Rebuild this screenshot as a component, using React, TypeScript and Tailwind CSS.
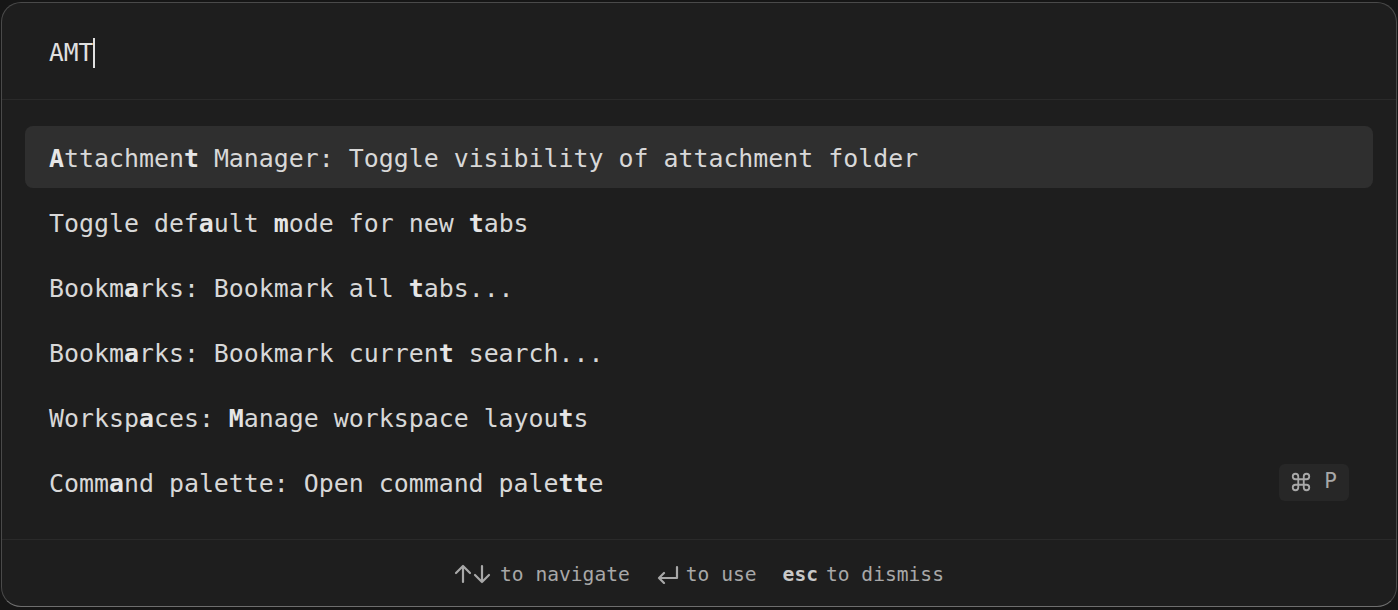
import React from 'react';

type Part = { t: string; b?: boolean };

const mono = { fontFamily: '"DejaVu Sans Mono", "Liberation Mono", monospace' };

// bold chars mark the fuzzy match for "AMT"
const items: { parts: Part[]; shortcut?: boolean }[] = [
    {
        parts: [
            { t: 'A', b: true },
            { t: 'ttachmen' },
            { t: 't', b: true },
            { t: ' Manager: Toggle visibility of attachment folder' },
        ],
    },
    {
        parts: [
            { t: 'Toggle def' },
            { t: 'a', b: true },
            { t: 'ult ' },
            { t: 'm', b: true },
            { t: 'ode for new ' },
            { t: 't', b: true },
            { t: 'abs' },
        ],
    },
    {
        parts: [
            { t: 'Bookm' },
            { t: 'a', b: true },
            { t: 'rks: Bookmark all ' },
            { t: 't', b: true },
            { t: 'abs...' },
        ],
    },
    {
        parts: [
            { t: 'Bookm' },
            { t: 'a', b: true },
            { t: 'rks: Bookmark curren' },
            { t: 't', b: true },
            { t: ' search...' },
        ],
    },
    {
        parts: [
            { t: 'Worksp' },
            { t: 'a', b: true },
            { t: 'ces: ' },
            { t: 'M', b: true },
            { t: 'anage workspace layou' },
            { t: 't', b: true },
            { t: 's' },
        ],
    },
    {
        parts: [
            { t: 'Comm' },
            { t: 'a', b: true },
            { t: 'nd palette: Open command pale' },
            { t: 'tt', b: true },
            { t: 'e' },
        ],
        shortcut: true,
    },
];

function CmdIcon() {
    return (
        <svg width="22" height="22" viewBox="0 0 24 24" fill="none" stroke="currentColor" strokeWidth="2" strokeLinecap="round" strokeLinejoin="round">
            <path d="M15 6v12a3 3 0 1 0 3-3H6a3 3 0 1 0 3 3V6a3 3 0 1 0-3 3h12a3 3 0 1 0-3-3" />
        </svg>
    );
}

function Row({ parts, shortcut, active }: { parts: Part[]; shortcut?: boolean; active?: boolean }) {
    return (
        <div
            className={`flex h-[62px] items-center justify-between rounded-lg px-6 ${
                active ? 'bg-[#2f2f2f]' : ''
            }`}
        >
            <span className="whitespace-pre pt-[5px] text-[24.9px] leading-none text-[#d8d8d8]">
                {parts.map((p, i) =>
                    p.b ? (
                        <b key={i} className="font-bold text-[#e6e6e6]">
                            {p.t}
                        </b>
                    ) : (
                        <span key={i}>{p.t}</span>
                    ),
                )}
            </span>
            {shortcut && (
                <span className="flex h-[37px] items-center gap-[12px] rounded-md bg-[#272727] pl-[11px] pr-[12px] text-[21px] text-[#a8a8a8]">
                    <CmdIcon />
                    <span>P</span>
                </span>
            )}
        </div>
    );
}

function UpDown() {
    return (
        <svg width="38" height="20" viewBox="0 0 38 20" fill="none" stroke="currentColor" strokeWidth="2.2" strokeLinecap="round" strokeLinejoin="round">
            <path d="M9 18V2M2 9l7-7 7 7" />
            <path d="M28 2v16M21 11l7 7 7-7" />
        </svg>
    );
}

function Enter() {
    return (
        <svg width="24" height="20" viewBox="0 0 24 20" fill="none" stroke="currentColor" strokeWidth="2.2" strokeLinecap="round" strokeLinejoin="round">
            <path d="M21 3v11H3M8 9l-5 5 5 5" />
        </svg>
    );
}

export default function App() {
    return (
        <div className="h-[610px] w-[1398px] bg-[#161616] px-px pt-[2px] pb-[3px]" style={mono}>
            <div className="flex h-full flex-col overflow-hidden rounded-[20px] border border-[#4a4a4a] border-b-[#6e6e6e] bg-[#1e1e1e]">
                {/* query input */}
                <div className="flex h-[97px] shrink-0 items-center border-b border-[#2a2a2a] pl-[47px] pt-[4px]">
                    <span className="text-[24.5px] leading-none text-[#e0e0e0]">AMT</span>
                    <span className="h-[30px] w-[1.5px] bg-[#e0e0e0]" />
                </div>

                {/* results */}
                <div className="flex flex-1 flex-col gap-[3px] px-[23px] pt-[26px]">
                    {items.map((it, i) => (
                        <Row key={i} parts={it.parts} shortcut={it.shortcut} active={i === 0} />
                    ))}
                </div>

                {/* footer hints */}
                <div className="flex h-[67px] shrink-0 items-center justify-center gap-[26px] border-t border-[#2a2a2a] pt-[3px] text-[19.6px] text-[#a8a8a8]">
                    <span className="flex items-center gap-[8px] whitespace-pre">
                        <UpDown />
                        to navigate
                    </span>
                    <span className="flex items-center gap-[6px] whitespace-pre">
                        <Enter />
                        to use
                    </span>
                    <span className="flex items-center gap-[8px] whitespace-pre">
                        <b className="font-bold text-[#c8c8c8]">esc</b>
                        to dismiss
                    </span>
                </div>
            </div>
        </div>
    );
}
